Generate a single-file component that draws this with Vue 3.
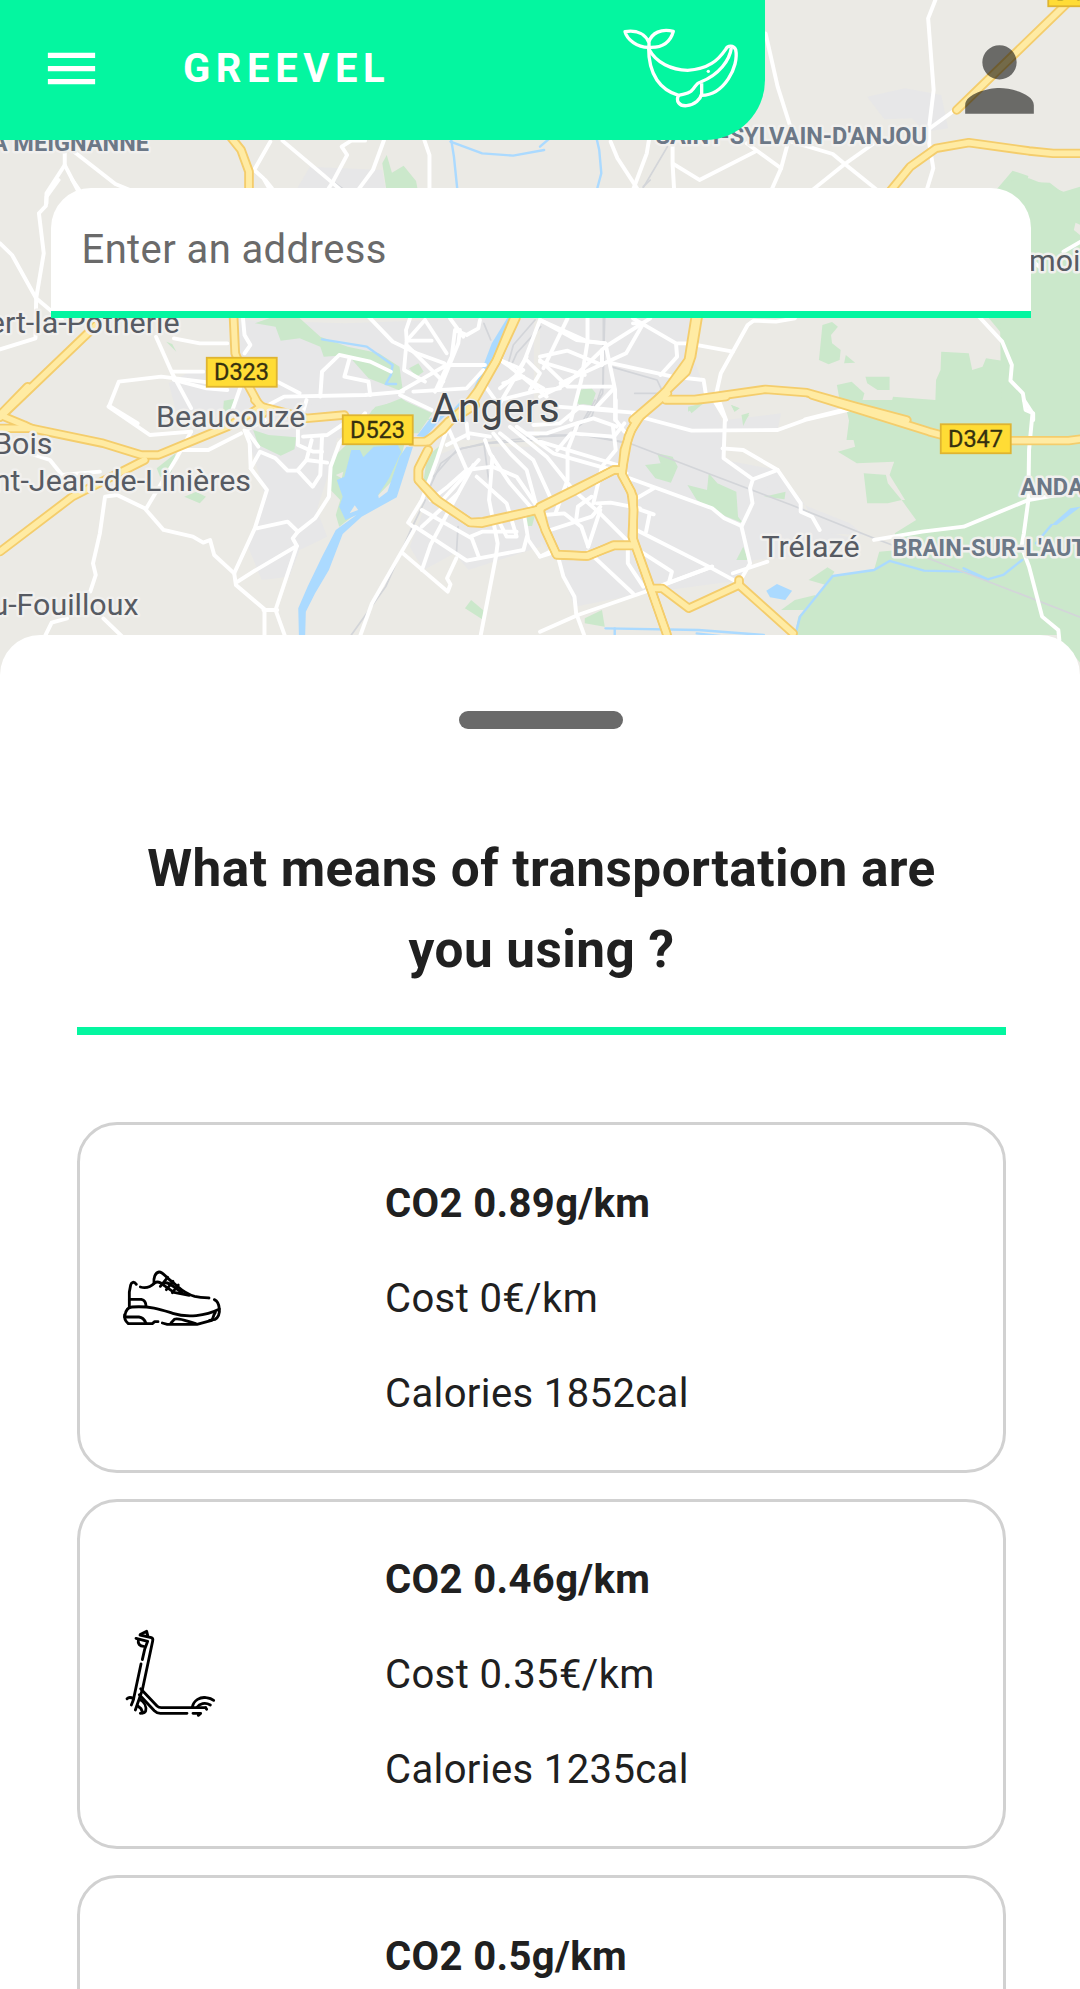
<script setup>
// Map sheets are surveyed at three units per screen pixel, each with its own origin.
const sheets = [
  {
    id: 'north-west', transform: 'translate(0 0) scale(.3444 .3333)',
    urban: ['M900 500L1110 510L1120 570H860Z'],
    green: ['M1110 490L1123 465L1138 518L1172 497L1208 543L1213 570H1122Z'],
    water: ['M1308 405L1318 470L1328 570', 'M1308 425L1400 460L1490 467L1580 450'],
    rail: ['M945 528L1000 570'],
    roads: ['M188 455V495L135 580V610', 'M188 495L228 575', 'M215 455L335 552L400 580', 'M785 425L738 510L765 535L790 580', 'M820 422L965 548L945 580', 'M965 548L1008 465L992 440L1020 422H1060', 'M965 548L1000 580', 'M1115 420L1083 510L1040 570', 'M1232 420L1247 465V570'],
    highways: ['M665 405L700 450L723 515V580']
  },
  {
    id: 'north-east', transform: 'translate(540 0) scale(.3444 .3333)',
    urban: ['M950 290L1060 265L1165 285L1185 385L1120 395L1080 355L1000 358Z'],
    green: ['M1320 575L1372 512L1418 528L1415 545L1480 548L1520 580L1570 570V720H1380Z'],
    water: ['M0 440L28 415', 'M162 405L172 450L178 520L165 570'],
    rail: ['M370 440L290 580'],
    roads: ['M655 100L690 260L730 390L700 505L668 580', 'M1148 0L1127 55L1143 270L1130 380L1130 430L1142 505L1120 580', 'M1205 330L1125 390', 'M970 430L885 492L785 575', 'M730 425L850 462L885 492L985 575', 'M600 430L700 505', 'M625 455L463 540L387 492', 'M205 425L225 475L285 570', 'M318 410L310 460L270 570', 'M385 420V492L390 580'],
    highways: ['M1540 0L1210 330', 'M1000 595L1075 500L1150 445L1245 428L1420 453L1490 460H1580']
  },
  {
    id: 'west', transform: 'translate(0 180) scale(.3444 .3333)',
    urban: ['M700 420L1000 430L1550 410V780H1000L780 700L510 690L490 610L560 570H680Z'],
    green: ['M740 430L790 412L860 405L930 470L1010 500L1100 520L1160 560L1170 635L1070 595L1010 525L940 530L930 500L870 475L815 482L800 440Z', 'M483 485L500 492L512 515Z', 'M650 662L690 655L670 700L648 690Z', 'M1080 690L1165 655L1250 720H1070Z', 'M1188 565L1215 550L1230 575L1210 590Z'],
    water: ['M935 478L1065 500L1140 555L1135 585L1120 612L1150 612'],
    waterAreas: ['M1475 410L1428 490L1402 560L1365 650L1385 660L1445 520L1495 410Z'],
    rail: ['M1405 430L1425 480', 'M1570 440L1500 520L1485 555'],
    roads: ['M170 0L135 50L133 78L113 100L127 220L105 355L180 420', 'M0 190L35 225L105 355L103 475L0 508', 'M210 0L230 30', 'M770 0L790 25', 'M505 475L580 490H660', 'M453 470L500 580L555 685', 'M500 575H590', 'M505 600L600 625L660 630', 'M705 410L710 465L727 495L710 520', 'M317 678L345 605L468 590L610 608', 'M317 678L400 730', 'M697 625L675 690', 'M770 680L825 650L1060 645L1170 635', 'M805 605L870 640', 'M930 650L935 575L985 525L1075 545L1135 575', 'M1015 535L1000 590L1070 605L1075 645', 'M1070 410L1140 485L1210 520L1290 550'],
    highways: ['M290 425L0 712', 'M678 405L683 520L715 605L765 700', 'M1500 395L1440 545L1380 655L1320 710']
  },
  {
    id: 'east', transform: 'translate(540 180) scale(.3444 .3333)',
    urban: ['M0 410H450L430 500L470 600L520 700L540 760H0Z'],
    green: ['M820 435L848 426L865 440L845 465L848 490L873 510L870 540L838 553L810 540Z', 'M888 525L915 548L883 550Z', 'M862 615L905 605L942 640L935 665L910 680L870 660Z', 'M945 590L1015 590V630L980 630L950 610Z', 'M1165 515L1245 520L1255 570L1285 560L1295 535L1360 545L1340 500L1368 495L1300 410V110H1580V780H890L900 700L1010 710L1025 650L1148 660L1150 600L1163 570Z', 'M1330 24L1375 0L1420 -5L1520 35L1570 20V720H1340Z', 'M108 630L150 625L162 640L150 675L108 670Z', 'M430 680L465 672L430 695Z', 'M555 675L580 685L565 695Z', 'M588 710L608 705L595 722Z'],
    land: ['M1555 128L1580 140V175L1550 150Z'],
    rail: ['M188 410L182 640L135 715', 'M205 560L340 600L358 640H275', 'M300 20L320 0'],
    roads: ['M1275 410L1342 485L1370 555L1366 602L1402 640L1410 690L1432 700V720', 'M1520 215L1570 185', 'M1425 240L1460 268', 'M740 415L685 425L620 422L603 435L525 580L512 640L540 720', 'M400 490H430L560 515', 'M270 415L395 490L398 530L350 585', 'M210 550L385 590L475 600L482 645', 'M0 420L140 485L190 490', 'M80 415L10 565', 'M138 415V485L120 600L90 720', 'M320 415L190 500L80 610L0 650', 'M270 430L300 430L250 520L60 610', 'M190 490L218 630V720', 'M0 540L80 620H215', 'M0 530L80 512L180 555V510', 'M0 545L130 585', 'M215 625L165 680', 'M770 718L880 690', 'M50 680L300 700'],
    highways: ['M460 405L440 530L425 575L360 640L270 720', 'M370 658H450L655 628L775 638L920 680L1065 720']
  },
  {
    id: 'south-west', transform: 'translate(0 400) scale(.3444 .3333)',
    urban: ['M710 90L850 10L1000 20L960 200L920 330L950 410L870 450L840 530L760 540L720 440L770 290L740 180Z', 'M1240 180L1330 140H1570V440L1360 510L1320 460L1230 510L1190 440L1230 330Z'],
    green: ['M735 90L780 105L860 112L855 148L815 167L750 135Z', 'M455 205L510 160L495 230H465Z', 'M535 290L570 275L598 290L580 310Z', 'M650 10L690 0L675 30H650Z', 'M960 180L1010 130H1175L1150 230L1090 295L985 380L975 345L988 300L960 270Z', 'M1090 20L1170 0L1255 40L1215 100H1195V45H1070Z', 'M1240 170L1285 130L1245 235L1228 255Z', 'M1368 600L1405 632L1400 658L1350 625Z', 'M1525 350L1555 340L1545 378H1530Z'],
    waterAreas: ['M1020 150L1045 150L1055 172L1085 140L1155 135L1165 155L1130 235L1098 285L1100 295L1125 275L1160 170L1180 140L1199 140L1152 292L1050 350L995 402L955 510L915 580L888 635L886 710H868L866 625L893 560L935 470L975 390L1035 345L1003 360L985 320L995 290L978 240L1000 230Z', 'M1210 108L1250 55L1300 40L1270 70L1235 112Z', 'M1310 35L1340 0L1365 5L1320 50Z'],
    land: ['M975 225L997 215L992 235Z', 'M1015 340L1030 316L1040 330Z'],
    rail: ['M1570 120L1420 130L1340 145L1280 190L1240 280', 'M1405 130L1420 250', 'M1330 380L1325 465', 'M1235 300L1195 385L1120 560L1020 705'],
    roads: ['M315 20L435 105L555 95', 'M100 165L145 180L180 225L290 215', 'M525 150H605L700 100', 'M555 95L515 170L480 230L425 325', 'M340 285L305 290L290 400L270 490L278 525L262 575', 'M340 285L420 325L475 390L560 410L590 428L610 420L622 465L680 520', 'M300 655L355 710', 'M195 655L150 668L130 710', 'M710 90L725 130L728 205L775 270L740 385L680 520L685 555L768 628V710', 'M728 205L755 155L800 175L835 212H865L908 260L930 225L935 110', 'M750 140L715 90L770 60', 'M745 385L835 365L865 395L915 355L955 290L960 200L985 130L1060 40', 'M865 395L850 415L862 438L740 512L690 545', 'M862 438L800 630L828 710', 'M765 630H805', 'M890 0L865 90V135L910 155L935 155', 'M880 110L950 105L1000 70', 'M865 210L890 180L950 188', 'M890 180L905 120', 'M1300 80L1268 180L1225 300L1185 368L1205 385L1130 520L1080 610L1045 710', 'M1170 460L1300 575L1308 553L1298 535L1325 475', 'M1225 510L1250 435L1330 280L1375 195', 'M1205 380L1355 482L1520 450L1530 410', 'M1395 710L1440 470L1445 430L1420 300L1430 170', 'M1300 80L1355 210L1300 260L1250 300', 'M1355 210L1430 200L1500 230L1560 320', 'M1225 330L1370 415L1390 470', 'M1365 410L1400 395H1500', 'M1285 300L1390 180', 'M1225 380L1330 280'],
    highways: ['M80 -40L0 45', 'M0 455L210 290L420 180', 'M0 85L90 85L300 130L410 165H460L660 80L760 20L890 55L1000 45', 'M0 45L70 75L100 90', 'M740 0L765 25', 'M1195 125H1235L1285 90L1310 60L1380 15', 'M1242 150L1215 205V240L1265 300L1365 368L1400 370L1570 328']
  },
  {
    id: 'south-east', transform: 'translate(540 400) scale(.3444 .3333)',
    urban: ['M270 30L440 90H690L700 40L540 60H530L535 180L690 210L810 390L930 420L860 460L620 480L590 540L300 580L100 620L50 480L0 420V0H360Z', 'M620 240L690 210L760 300L820 400L940 405L900 370L730 300Z'],
    green: ['M890 30L920 0H1570V790L1500 705H740L750 650L850 530L970 510L985 455L1040 450L1030 400L1092 360L1050 300L1010 310H950L940 220L1010 225L1028 185L920 190L865 155L915 140Z', 'M430 25L480 5L440 40Z', 'M555 15L578 25L565 35Z', 'M585 45L608 38L590 78Z', 'M305 195L350 190L340 160L385 170L400 200L380 248L335 235Z', 'M428 255L485 270L490 220L515 250L570 275L575 350L590 370L530 345L455 300Z', 'M570 480L590 440L605 480Z', 'M650 290L713 275L710 298Z', 'M780 540L835 502L855 515L830 555Z', 'M700 630L740 600L800 585L795 610L765 630Z', 'M130 655L180 630L188 680L130 670Z', 'M105 0H155L115 15Z'],
    land: ['M1000 205L1028 185L1015 225L1060 300L1050 300L1010 250Z'],
    waterAreas: ['M657 572L688 552L732 572L712 600L668 592Z', 'M1485 375L1540 325L1570 320L1500 375Z'],
    water: ['M740 710L755 650L850 528L970 510L1015 483L1115 512L1230 515L1300 538L1345 525L1400 480', 'M1230 505L1300 538', 'M1440 430L1485 375', 'M190 685L460 690L650 705', 'M217 685V705', 'M455 700L540 710'],
    rail: ['M0 105H120L260 130L500 225L730 315L970 415L1140 480L1570 652', 'M160 0L120 70'],
    roads: ['M270 45L440 92L690 90L770 60L895 30', 'M505 0L537 55L533 175L618 238L610 265L617 310L585 380L610 490L580 545', 'M530 145L590 150L690 210L757 310V335L790 350L812 390', 'M690 210L618 238', 'M1405 0L1430 40L1420 150L1418 300L1405 400L1398 440L1420 500L1458 650L1505 690L1508 720', 'M970 420L1110 395L1230 380L1418 300L1500 285', 'M260 235L500 325L535 355L585 378', 'M270 385L490 500L580 550', 'M355 555L500 500', 'M560 520L660 485', 'M0 695L110 645L320 570L500 500', 'M280 295L330 265', 'M280 325L330 343', 'M318 343L308 395', 'M270 440L383 515L375 545', 'M255 450V490L300 560', 'M55 480L68 530L100 590L105 640L130 710', 'M140 455L270 580', 'M10 345L70 340L120 380L140 440', 'M0 470L30 460', 'M30 390L150 350L175 320', 'M140 440L175 330', 'M45 340L80 240L80 150L110 70', 'M50 150L90 100L215 110L245 70', 'M0 125L225 195', 'M220 0V60L245 95', 'M155 310L180 200L220 150L212 80', 'M105 360L110 320L150 290', 'M165 310L205 308L290 325'],
    highways: ['M365 0H455L540 -10', 'M370 -20L290 50L265 90L245 150L238 225L265 275L272 330L268 410L320 560L372 715', 'M790 -15L1130 95L1165 105', 'M1365 122H1535L1570 117', 'M0 320L215 210H235', 'M0 330L15 390L48 463L135 468L215 437H265', 'M325 565H355L432 625L578 555L735 700', 'M578 540V555']
  },
  {
    id: 'centre', transform: 'translate(400 310) scale(.3333)',
    green: ['M530 280L550 238L585 250L575 285L535 280Z'],
    rail: ['M610 25V220L575 320L520 360', 'M100 500L170 420L250 400L420 380L560 375L690 400', 'M405 30L340 105L325 160'],
    roads: ['M30 25L18 60L20 92H95', 'M75 30L20 92L12 180L75 215', 'M75 30L140 130', 'M20 105L75 160L130 215', 'M0 245L140 165H255', 'M0 255L95 300', 'M105 245L155 140L165 60L200 75L235 55L240 30', 'M180 60L175 100L120 235', 'M150 25L190 80', 'M250 180L200 235L40 245', 'M300 150L370 180L300 235', 'M420 30L370 160L300 280', 'M300 150L330 170L440 260', 'M380 140L350 190L430 235', 'M310 220L370 200', 'M380 150L420 190L390 240', 'M300 270L400 245L480 235', 'M250 220L300 290', 'M420 30L530 90L615 100', 'M380 370L440 370L530 340L580 325L650 350', 'M400 345L480 340L540 290L640 300', 'M330 350L440 440L520 540L600 610L700 710', 'M350 350L460 430L600 470L680 490', 'M200 340L205 385', 'M140 405L210 370L270 380', 'M280 370L330 430L380 480L410 590', 'M300 370L400 450L450 560', 'M255 390L270 430L330 520L400 600', 'M370 600L385 690L420 740L460 720', 'M230 500L320 580L350 680H320L290 620'],
    highways: ['M348 25L290 150L235 240L190 300L145 335', 'M145 335L85 395H45', 'M85 420L55 480V510L115 572L210 637L250 635L410 600L520 545L640 480H660', 'M410 600L470 735L565 738L640 705H690', 'M885 25L865 150L800 240L710 330L685 380L665 490L700 560L700 690L800 970']
  }
]

const towns = [
  { name: 'moir', x: 1029, y: 270.7 },
  { name: 'ert-la-Potherie', x: 179.5, y: 332.7, anchor: 'end' },
  { name: 'Beaucouzé', x: 156, y: 427.3 },
  { name: 'Bois', x: 52.5, y: 454.3, anchor: 'end' },
  { name: 'nt-Jean-de-Linières', x: 251, y: 491.3, anchor: 'end' },
  { name: 'u-Fouilloux', x: 138.5, y: 615, anchor: 'end' },
  { name: 'Trélazé', x: 761.5, y: 557.3 }
]
const communes = [
  { name: 'A MEIGNANNE', x: 149, y: 150.7, anchor: 'end' },
  { name: "SAINT-SYLVAIN-D'ANJOU", x: 927, y: 144, anchor: 'end' },
  { name: 'ANDA', x: 1020.5, y: 495 },
  { name: "BRAIN-SUR-L'AUT", x: 892.5, y: 556 }
]
const shields = [
  { name: 'D323', x: 206, y: 357 },
  { name: 'D523', x: 342, y: 414.5 },
  { name: 'D347', x: 940, y: 423.5 },
  { name: 'D115', x: 1047.5, y: -23.5 }
]

const modes = [
  {
    id: 'walk', co2: '0.89g/km', cost: '0€/km', calories: '1852cal', viewBox: '66 -9 300 300',
    strokes: ['M109 103C102 93 94 96 92 105L88 126V173', 'M121 111C139 116 151 112 164 99C173 92 183 98 193 107L222 127L268 136', 'M162 100C160 84 165 68 177 66C188 65 193 78 213 93C238 112 250 130 284 139C300 142 314 143 327 144', 'M203 82L181 109M219 94L199 119M235 105L217 128', 'M192 99C208 94 221 113 247 128', 'M343 149C352 153 357 164 358 177C360 191 354 204 345 208L329 211', 'M88 148H124C134 150 138 159 138 169', 'M75 196C77 181 84 172 96 171C154 167 187 180 218 190C262 204 317 198 357 178', 'M74 201H117C128 202 134 210 138 220', 'M74 194C72 205 77 214 85 221H157L164 215H174', 'M187 219L202 223H291L335 211C340 205 339 197 346 187', 'M213 219L223 208C236 202 258 213 287 221']
  },
  {
    id: 'scooter', co2: '0.46g/km', cost: '0.35€/km', calories: '1235cal', viewBox: '66 42 300 300',
    strokes: ['M108 85L143 94L134 118L127 149', 'M120 75L154 83Q160 85 158 93L127 240L106 300', 'M122 73L140 64L143 76', 'M115 89C113 101 119 109 131 109', 'M123 162L100 270L94 285', 'M81 266C86 261 94 262 101 266', 'M122 236L171 288Q176 293 184 293H317', 'M118 254L163 302Q171 310 181 310H261', 'M119 268C132 275 140 289 137 303Q134 310 121 310', 'M112 287L123 296L128 308', 'M277 291C281 270 301 260 319 263Q333 265 341 271', 'M292 291C298 281 315 276 331 285', 'M317 293L320 298M279 310H302L295 316']
  },
  { id: 'bike', co2: '0.5g/km', cost: '0.1€/km', calories: '980cal', viewBox: '0 0 300 300', strokes: ['M20 190A50 50 0 1 0 120 190A50 50 0 1 0 20 190M180 190A50 50 0 1 0 280 190A50 50 0 1 0 180 190', 'M70 190L110 110H200L150 190H70M190 85L230 190'] }
]
</script>

<template>
  <main class="app">
    <section class="map-area">
      <svg class="map" viewBox="0 0 1080 700" aria-hidden="true">
        <g v-for="s in sheets" :key="'a' + s.id" :transform="s.transform">
          <path v-for="d in s.urban" :key="d" :d="d" class="urban" />
        </g>
        <g v-for="s in sheets" :key="'g' + s.id" :transform="s.transform">
          <path v-for="d in s.green" :key="d" :d="d" class="green" />
          <path v-for="d in s.waterAreas" :key="d" :d="d" class="water-area" />
          <path v-for="d in s.land" :key="d" :d="d" class="land" />
          <path v-for="d in s.water" :key="d" :d="d" class="water" />
          <path v-for="d in s.rail" :key="d" :d="d" class="rail" />
        </g>
        <g v-for="s in sheets" :key="'r' + s.id" :transform="s.transform">
          <path v-for="d in s.roads" :key="d" :d="d" class="road" />
        </g>
        <g v-for="s in sheets" :key="'c' + s.id" :transform="s.transform">
          <path v-for="d in s.highways" :key="d" :d="d" class="casing" />
        </g>
        <g v-for="s in sheets" :key="'h' + s.id" :transform="s.transform">
          <path v-for="d in s.highways" :key="d" :d="d" class="highway" />
        </g>
        <text v-for="t in towns" :key="t.name" :x="t.x" :y="t.y" :text-anchor="t.anchor" class="town">{{ t.name }}</text>
        <text v-for="t in communes" :key="t.name" :x="t.x" :y="t.y" :text-anchor="t.anchor" class="commune">{{ t.name }}</text>
        <text x="431.5" y="421.7" class="city">Angers</text>
        <g v-for="h in shields" :key="h.name">
          <rect :x="h.x + 0.75" :y="h.y + 0.75" width="70" height="29" class="shield" />
          <text :x="h.x + 35.5" :y="h.y + 23.2" text-anchor="middle" class="shield-text">{{ h.name }}</text>
        </g>
      </svg>

      <div class="top">
        <header class="bar">
          <svg class="menu" viewBox="0 0 24 24"><path d="M3 18h18v-2H3v2zm0-5h18v-2H3v2zm0-7v2h18V6H3z" fill="#fff" /></svg>
          <h1 class="brand">GREEVEL</h1>
          <svg class="logo" viewBox="60 48 360 252">
            <path d="M147 101C137 77 113 62 75 68C81 92 112 116 147 115C187 117 211 100 220 67C183 58 156 72 147 98V121C169 162 214 183 263 184C326 180 354 154 377 121C383 108 401 108 407 122C418 173 371 259 305 259" />
            <path d="M146 115C145 199 183 244 236 259C250 255 262 256 273 247C287 235 286 223 302 219C358 197 389 153 394 117" />
            <path d="M236 259C226 276 238 292 260 290C285 288 301 271 305 255V223" />
            <circle cx="325" cy="187" r="5" />
          </svg>
        </header>
        <svg class="person" viewBox="0 0 24 24"><path d="M12 12c2.210 0 4-1.790 4-4s-1.790-4-4-4-4 1.790-4 4 1.790 4 4 4zm0 2c-2.670 0-8 1.340-8 4v2h16v-2c0-2.660-5.330-4-8-4z" /></svg>
      </div>

      <div class="search"><span>Enter an address</span></div>
    </section>

    <section class="sheet">
      <div class="handle"></div>
      <h2 class="question">What means of transportation are you using ?</h2>
      <ul class="modes">
        <li v-for="m in modes" :key="m.id" class="mode">
          <svg class="mode-icon" :viewBox="m.viewBox"><path v-for="d in m.strokes" :key="d" :d="d" /></svg>
          <div class="facts">
            <p class="co2">CO2 {{ m.co2 }}</p>
            <p>Cost {{ m.cost }}</p>
            <p>Calories {{ m.calories }}</p>
          </div>
        </li>
      </ul>
    </section>
  </main>
</template>

<style>
body { margin: 0; background: #fff; }
</style>

<style scoped>
.app { width: 1080px; height: 1989px; overflow: hidden; background: #fff; font-family: Roboto, sans-serif; color: #202020; }
.map-area { position: relative; height: 635px; }
.map { position: absolute; top: 0; left: 0; width: 1080px; height: 700px; background: #ebeae5; }
.urban { fill: #e7e7e8; }
.green { fill: #cbe8cb; }
.land { fill: #ebeae5; }
.water-area { fill: #abdaff; }
.water, .rail, .road, .casing, .highway { fill: none; stroke-linejoin: round; stroke-linecap: round; }
.water { stroke: #abdaff; stroke-width: 7; }
.rail { stroke: #d3d5d9; stroke-width: 5; }
.road { stroke: #fff; stroke-width: 11.5; }
.casing { stroke: #f4cd6c; stroke-width: 28; }
.highway { stroke: #ffeba3; stroke-width: 17; }
.town, .city, .commune { paint-order: stroke; stroke: #f1f0ee; stroke-width: 5px; stroke-linejoin: round; }
.town { font-size: 30.4px; fill: #575b63; }
.city { font-size: 40px; fill: #42464b; stroke-width: 3px; letter-spacing: 0.4px; }
.commune { font-size: 23.5px; font-weight: 700; fill: #6c7887; }
.shield { fill: #ffdc35; stroke: #dfb431; stroke-width: 1.8; }
.shield-text { font-size: 23.5px; fill: #35300f; stroke: #35300f; stroke-width: 0.3px; }

.top { position: relative; display: flex; justify-content: space-between; height: 140px; }
.bar { display: flex; align-items: center; box-sizing: border-box; width: 765px; height: 140px; padding: 0 25px 3px 40px; background: #04f6a0; border-bottom-right-radius: 60px; }
.menu { width: 63px; height: 63px; }
.brand { margin: 0 0 0 80px; font-size: 40px; line-height: 48px; font-weight: 700; letter-spacing: 5.6px; color: #fff; }
.logo { width: 120px; height: 84px; margin: 0 0 3px auto; fill: none; stroke: #fff; stroke-width: 10; stroke-linejoin: round; }
.logo circle { fill: #fff; stroke: none; }
.person { width: 103px; height: 103px; margin: 27.5px 29px 0 0; fill: rgba(0, 0, 0, 0.55); }
.search { position: relative; display: flex; align-items: center; box-sizing: border-box; width: 980px; height: 130px; margin: 48px 0 0 51px; padding: 0 30.5px; background: #fff; border-bottom: 7px solid #04f6a0; border-radius: 40px 40px 0 0; font-size: 40px; letter-spacing: 0.4px; color: #6a6a6a; }

.sheet { position: relative; display: flex; flex-direction: column; align-items: center; height: 1354px; background: #fff; border-radius: 40px 40px 0 0; }
.handle { flex: none; width: 164px; height: 18px; margin: 76px 0 0 2px; border-radius: 9px; background: #6a6a6a; }
.question { flex: none; box-sizing: border-box; width: 929px; height: 207px; margin: 99px 0 0 3px; padding: 0 60px; border-bottom: 8px solid #04f6a0; text-align: center; font-size: 51.3px; line-height: 81px; font-weight: 700; letter-spacing: 0.45px; }
.modes { flex: none; display: flex; flex-direction: column; gap: 26px; width: 929px; margin: 87px 0 0 3px; padding: 0; list-style: none; }
.mode { display: flex; align-items: center; box-sizing: border-box; height: 350.5px; padding-left: 42px; border: 3px solid #d1d1d1; border-radius: 40px; }
.mode-icon { width: 100px; height: 100px; fill: none; stroke: #000; stroke-width: 8.5; stroke-linecap: round; stroke-linejoin: round; }
.facts { margin-left: 163px; padding-top: 2px; font-size: 40px; line-height: 95px; letter-spacing: 0.38px; }
.facts p { margin: 0; }
.facts .co2 { font-weight: 700; }
</style>
